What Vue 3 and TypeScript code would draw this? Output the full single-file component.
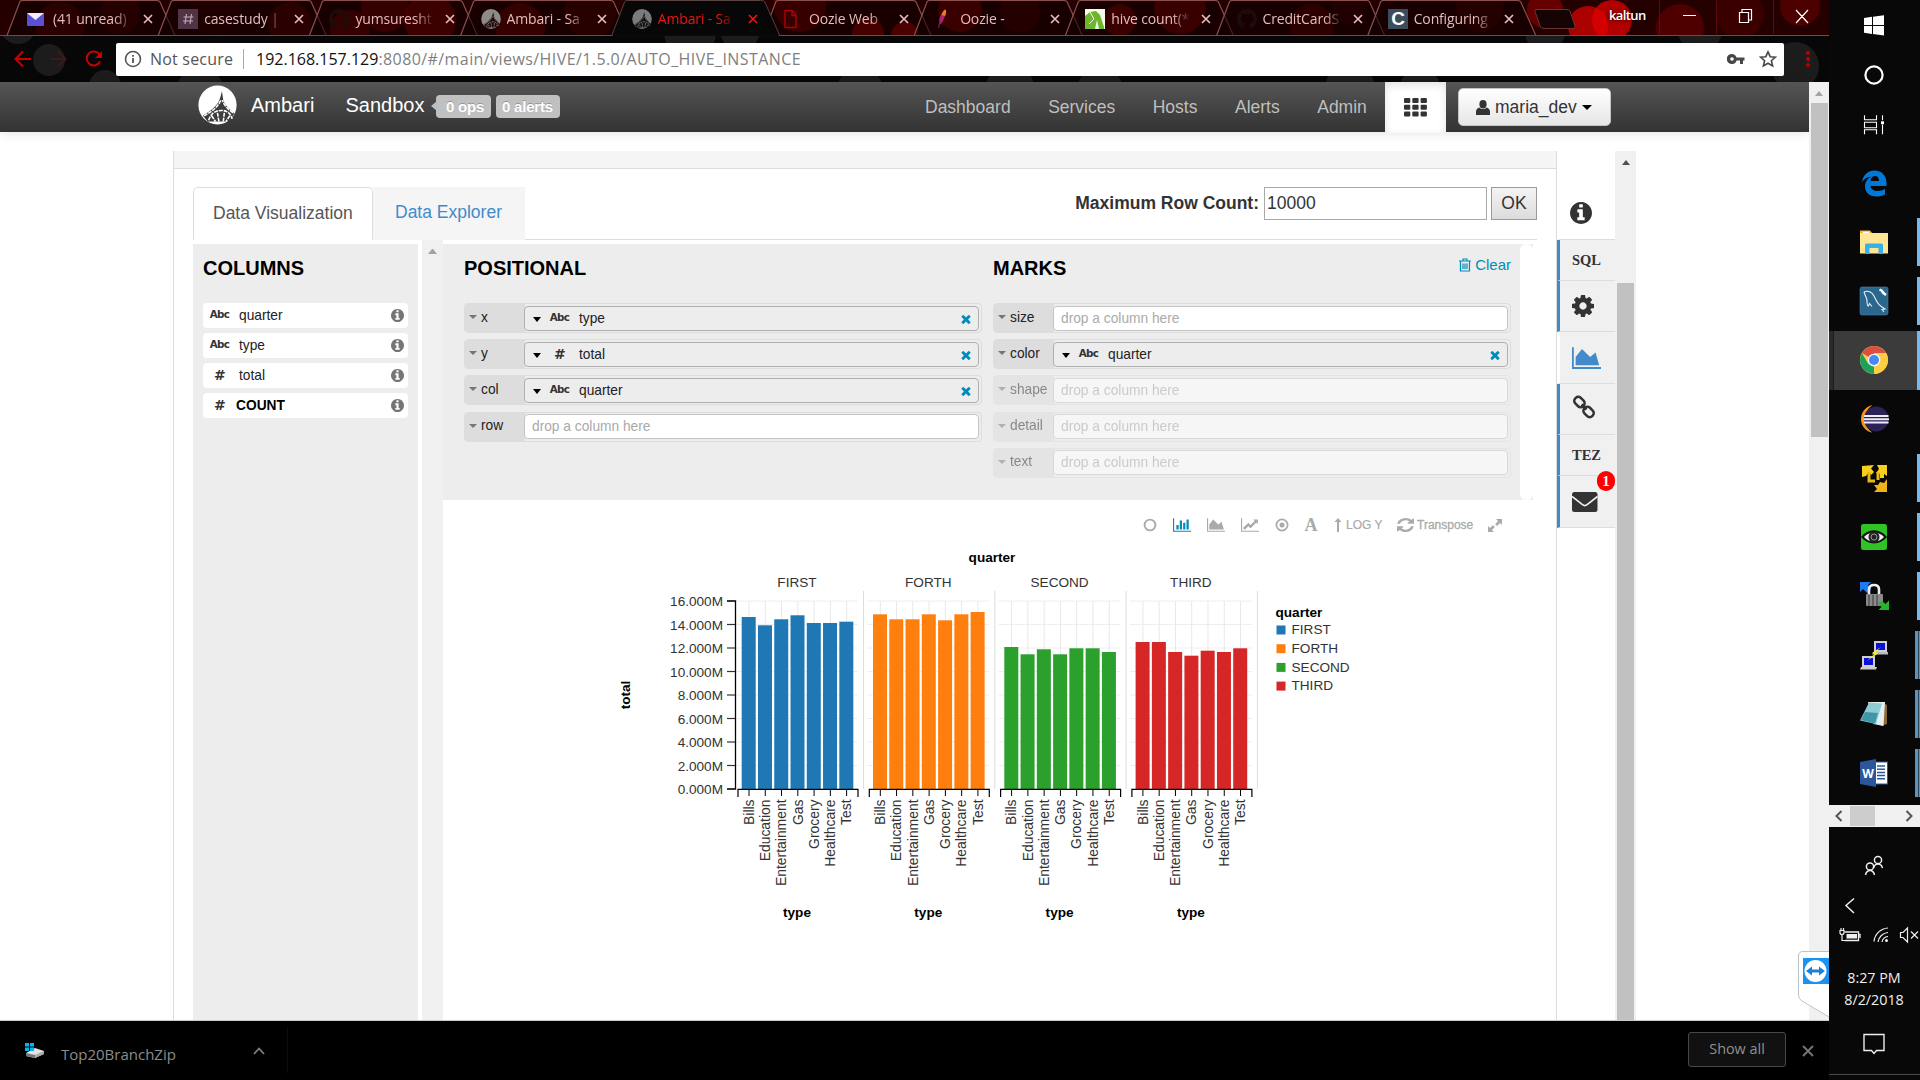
<script setup lang="ts">
interface BrowserTab { title: string; icon: string; active?: boolean }
interface Shelf { label: string; kind?: string; value?: string; disabled?: boolean }
interface TaskItem { icon: string; top: number; mark?: 'one' | 'many'; active?: boolean }
interface Facet { name: string; color: string; tops: number[] }

const FA = {
  info: 'M1152 1376v-160q0-14-9-23t-23-9h-96v-512q0-14-9-23t-23-9h-320q-14 0-23 9t-9 23v160q0 14 9 23t23 9h96v320h-96q-14 0-23 9t-9 23v160q0 14 9 23t23 9h448q14 0 23-9t9-23zm-128-896v-160q0-14-9-23t-23-9h-192q-14 0-23 9t-9 23v160q0 14 9 23t23 9h192q14 0 23-9t9-23zm640 416q0 209-103 385.5t-279.5 279.5-385.5 103-385.5-103-279.5-279.5-103-385.5 103-385.5 279.5-279.5 385.5-103 385.5 103 279.5 279.5 103 385.5z',
  area: 'M2048 1536v128h-2048v-1536h128v1408h1920zm-384-1024l256 896h-1664v-576l448-576 576 576z',
  bar: 'M640 896v512h-256v-512h256zm384-512v1024h-256v-1024h256zm1024 1152v128h-2048v-1536h128v1408h1920zm-640-896v768h-256v-768h256zm384-384v1152h-256v-1152h256z',
  line: 'M2048 1536v128h-2048v-1536h128v1408h1920zm-128-1248v435q0 21-19.5 29.5t-35.5-7.5l-121-121-633 633q-10 10-23 10t-23-10l-233-233-416 416-192-192 585-585q10-10 23-10t23 10l233 233 464-464-121-121q-16-16-7.5-35.5t29.5-19.5h435q14 0 23 9t9 23z',
  gear: 'M1152 896q0-106-75-181t-181-75-181 75-75 181 75 181 181 75 181-75 75-181zm512-109v222q0 12-8 23t-20 13l-185 28q-19 54-39 91 35 50 107 138 10 12 10 25t-9 23q-27 37-99 108t-94 71q-12 0-26-9l-138-108q-44 23-91 38-16 136-29 186-7 28-36 28h-222q-14 0-24.5-8.5t-11.5-21.5l-28-184q-49-16-90-37l-141 107q-10 9-25 9-14 0-25-11-126-114-165-168-7-10-7-23 0-12 8-23 15-21 51-66.5t54-70.5q-27-50-41-99l-183-27q-13-2-21-12.5t-8-23.5v-222q0-12 8-23t19-13l186-28q14-46 39-92-40-57-107-138-10-12-10-24 0-10 9-23 26-36 98.5-107.5t94.5-71.5q13 0 26 10l138 107q44-23 91-38 16-136 29-186 7-28 36-28h222q14 0 24.5 8.5t11.5 21.5l28 184q49 16 90 37l142-107q9-9 24-9 13 0 25 10 129 119 165 170 7 8 7 22 0 12-8 23-15 21-51 66.5t-54 70.5q26 50 41 98l183 28q13 2 21 12.5t8 23.5z',
  times: 'M1490 1322q0 40-28 68l-136 136q-28 28-68 28t-68-28l-294-294-294 294q-28 28-68 28t-68-28l-136-136q-28-28-28-68t28-68l294-294-294-294q-28-28-28-68t28-68l136-136q28-28 68-28t68 28l294 294 294-294q28-28 68-28t68 28l136 136q28 28 28 68t-28 68l-294 294 294 294q28 28 28 68z',
  refresh: 'M1639 1056q0 5-1 7-64 268-268 434.5t-478 166.5q-146 0-282.5-55t-243.5-157l-129 129q-19 19-45 19t-45-19-19-45v-448q0-26 19-45t45-19h448q26 0 45 19t19 45-19 45l-137 137q71 66 161 102t187 36q134 0 250-65t186-179q11-17 53-117 8-23 30-23h192q13 0 22.5 9.5t9.5 22.5zm25-800v448q0 26-19 45t-45 19h-448q-26 0-45-19t-19-45 19-45l138-138q-148-137-349-137-134 0-250 65t-186 179q-11 17-53 117-8 23-30 23h-199q-13 0-22.5-9.5t-9.5-22.5v-7q65-268 270-434.5t480-166.5q146 0 284 55.5t245 156.5l130-129q19-19 45-19t45 19 19 45z',
}

const github = '<path transform="scale(1.25)" fill="#1d0c0c" d="M8 0C3.58 0 0 3.58 0 8c0 3.54 2.29 6.53 5.47 7.59.4.07.55-.17.55-.38 0-.19-.01-.82-.01-1.49-2.01.37-2.53-.49-2.69-.94-.09-.23-.48-.94-.82-1.13-.28-.15-.68-.52-.01-.53.63-.01 1.08.58 1.23.82.72 1.21 1.87.87 2.33.66.07-.52.28-.87.51-1.07-1.78-.2-3.64-.89-3.64-3.95 0-.87.31-1.59.82-2.15-.08-.2-.36-1.02.08-2.12 0 0 .67-.21 2.2.82.64-.18 1.32-.27 2-.27s1.36.09 2 .27c1.53-1.04 2.2-.82 2.2-.82.44 1.1.16 1.92.08 2.12.51.56.82 1.27.82 2.15 0 3.07-1.87 3.75-3.65 3.95.29.25.54.73.54 1.48 0 1.07-.01 1.93-.01 2.2 0 .21.15.46.55.38A8.01 8.01 0 0 0 16 8c0-4.42-3.58-8-8-8z"/>'
const ambari = (disc: string, ink: string) =>
  `<ellipse cx="10" cy="10" rx="9.8" ry="10" fill="${disc}"/><path fill="${ink}" d="M12.3 3l.5 3.600c.1 1.800 1.600 4.400 5.800 7.600L16.500 18.500H5L2.400 15.400c4.500-2.200 8-5.600 8.900-8.800z"/><path d="M5.500 17.800c1-3.500 3.500-5 6.500-5s4.800 1.500 5.500 4.300M7 15.500l2 3M10 14l.8 5M13.500 14l-.6 5M16.300 15.500l-2 3M3 15.600c5-2.600 7.600-5.200 8.800-8.400M18 14c-3-2-5-4.500-5.500-6.500" stroke="${disc}" stroke-width=".8" fill="none" stroke-dasharray="2 .5"/>`

const tabIcons: Record<string, string> = {
  mail: '<rect y="4" width="17" height="13" rx="1" fill="#5a4fd6"/><path d="M0 4h17l-8.500 7z" fill="#f2ecff"/>',
  hash: '<rect y="0" width="20" height="20" fill="#4e3444"/><path d="M8.500 5l-1.500 10M13.500 5l-1.500 10M5.500 8h10M5 12h10" stroke="#c9a8b8" stroke-width="1.100"/>',
  github,
  ambari: ambari('#8d8a88', '#1d0605'),
  ambariActive: ambari('#7b7b7b', '#111'),
  doc: '<path d="M2 1.500h7l4 4.500v12.500H2zM9 1.500v5h4" fill="none" stroke="#b00000" stroke-width="1.400"/>',
  feather: '<path d="M11 .5c2 1 1 5-1 9-1 2.500-2 5-4.500 6.500C4 12 6.500 4 11 .5z" fill="#b3206d"/><path d="M11 .5c2 1 1 4 0 6.500L7.500 6C8.500 3.500 9.500 1.500 11 .5z" fill="#ee7a22"/><path d="M6 12l-1.500 7" stroke="#62215c" stroke-width="1.200"/>',
  elephant: '<rect width="20" height="20" fill="#f4fbe9"/><path d="M0 20V7L5 3l6-1 4 4 4 12v2h-5l-2-9-2 9z" fill="#6cb52d"/><path d="M5 3l4 7-5 5" stroke="#f4fbe9" fill="none"/>',
  c: '<rect width="20" height="20" fill="#3b4c5b"/><text x="10" y="16.200" text-anchor="middle" font-family="Liberation Sans, sans-serif" font-weight="700" font-size="19" fill="#fff">C</text>',
}
const browserTabs: BrowserTab[] = [
  { title: '(41 unread)', icon: 'mail' }, { title: 'casestudy |', icon: 'hash' },
  { title: 'yumsuresht', icon: 'github' }, { title: 'Ambari - Sa', icon: 'ambari' },
  { title: 'Ambari - Sa', icon: 'ambariActive', active: true }, { title: 'Oozie Web', icon: 'doc' },
  { title: 'Oozie -', icon: 'feather' }, { title: 'hive count(*', icon: 'elephant' },
  { title: 'CreditCardS', icon: 'github' }, { title: 'Configuring', icon: 'c' },
]
const tabPath = (i: number) => {
  const x = 24 + 151.2 * i
  return `M${x - 17} 35.500L${x - 4} 1.500Q${x - 3.500} .5 ${x - 1} .5H${x + 132}Q${x + 135} .5 ${x + 136} 2L${x + 151} 35.500`
}
const bokeh: [number, number, number, string][] = [
  [60, 26, 24, '#5a0000'], [120, 14, 20, '#4a0000'], [215, 8, 26, '#3a0000'], [290, 24, 22, '#5c0000'], [350, 30, 20, '#7a0000'],
  [385, 8, 24, '#7d0000'], [430, 20, 26, '#960000'], [520, 28, 25, '#7d0000'], [590, 12, 26, '#500000'], [800, 6, 26, '#800000'],
  [868, 34, 16, '#b00000'], [905, 36, 14, '#c80000'], [960, 10, 22, '#8a0000'], [1020, 12, 20, '#480000'], [1120, 20, 16, '#8c0000'],
  [1180, 8, 26, '#8a0000'], [1312, 26, 22, '#640000'], [1350, 6, 18, '#3c0000'], [1480, 8, 24, '#480000'], [1545, 10, 18, '#7c0000'],
  [1588, 26, 20, '#d80000'], [1612, 20, 20, '#e00000'], [1680, 28, 24, '#5c0000'], [1740, 14, 24, '#420000'], [1800, 6, 20, '#5a0000'],
]
const greyBokeh: [number, number, number][] = [[18, -10, 18], [49, 24, 16], [105, 50, 16], [200, 56, 24], [690, -4, 26], [740, -6, 20], [860, 52, 22], [1010, 52, 24], [1100, 52, 22], [1350, 50, 24], [1420, 52, 20], [1545, -4, 20], [1700, -6, 22], [1795, 30, 24]]

const navLinks = ['Dashboard', 'Services', 'Hosts', 'Alerts', 'Admin']
const columns = [
  { kind: 'Abc', name: 'quarter' }, { kind: 'Abc', name: 'type' },
  { kind: '#', name: 'total' }, { kind: '#', name: 'COUNT', bold: true },
]
const encodings: { title: string; shelves: Shelf[] }[] = [
  { title: 'POSITIONAL', shelves: [
    { label: 'x', kind: 'Abc', value: 'type' }, { label: 'y', kind: '#', value: 'total' },
    { label: 'col', kind: 'Abc', value: 'quarter' }, { label: 'row' }] },
  { title: 'MARKS', shelves: [
    { label: 'size' }, { label: 'color', kind: 'Abc', value: 'quarter' },
    { label: 'shape', disabled: true }, { label: 'detail', disabled: true }, { label: 'text', disabled: true }] },
]

const facets: Facet[] = [
  { name: 'FIRST', color: '#1f77b4', tops: [617, 625.3, 619.3, 615.3, 623, 623, 621.7] },
  { name: 'FORTH', color: '#ff7f0e', tops: [614.3, 619.3, 619.3, 614.3, 620.3, 614.3, 612] },
  { name: 'SECOND', color: '#2ca02c', tops: [647, 654.3, 649.3, 654.3, 648.3, 648.3, 652] },
  { name: 'THIRD', color: '#d62728', tops: [642, 642, 652, 655.7, 650.7, 652, 648.3] },
]
const categories = ['Bills', 'Education', 'Entertainment', 'Gas', 'Grocery', 'Healthcare', 'Test']
const yTicks = Array.from({ length: 9 }, (_, i) => ({ label: `${i * 2}.000M`, y: 789 - i * 23.5 }))

const taskIcons: Record<string, string> = {
  windows: '<path fill="#fff" d="M4 7l8-1.200V14H4zM13 5.700L24 4.200V14H13zM4 15h8v8l-8-1.200zM13 15h11v9.600l-11-1.500z"/>',
  cortana: '<circle cx="14" cy="14" r="8.600" fill="none" stroke="#fff" stroke-width="2.200"/>',
  view: '<path transform="translate(0 -2.200)" fill="none" stroke="#fff" stroke-width="1.100" d="M4.500 4.500v4.500h12V4.500M4.500 23.500V19h12v4.500M4.500 11.500h12V17h-12zM22.500 4.500v5M22.500 14v9.500"/><rect x="21" y="8.300" width="3" height="3" fill="#fff"/>',
  edge: '<path fill="#0078d7" d="M2 13C3 6 8 1.500 14.500 1.500 22 1.500 26.500 7 26.500 14v3H10.500c.3 3.500 3.500 5 7 5 3 0 5.500-.8 7.500-2v5.500c-2.500 1.500-5.500 2-8.500 2-7 0-11.500-4-11.500-10 0-4.500 2.500-8 6.500-10C7 8 4 10 2 13zM10.500 12h8.500c0-3-1.500-5-4-5s-4.200 2-4.500 5z"/>',
  folder: '<path fill="#f5b82e" d="M0 2.500h10l2.500 3H0z"/><path fill="#ffe694" d="M0 5h28v20.500H0z"/><rect x="3" y="3.700" width="6" height="1.500" fill="#fff"/><path fill="#38b0e8" d="M5 26V17q0-1.500 1.500-1.500h15Q23 15.500 23 17v9h-4.500v-6h-9v6z"/>',
  mysql: '<rect x="0" y="0" width="28" height="28" rx="2" fill="#2b668c" stroke="#4985a8" stroke-width=".6"/><path d="M4 5c4-2 8 0 10 4 3 6 4 9 8 11l3 2-3 .5 2 2.500M4 5c1 4 3 5 3 9 0 3 0 5 1.500 5l1-2.500 2.500 3" fill="none" stroke="#e8f2f8" stroke-width="1.100"/><path d="M19.500 2.500l2 1 3 3.500M22 5l4 3" stroke="#fff" stroke-width="2.400" fill="none"/>',
  chrome: '<circle cx="14" cy="14" r="14" fill="#ffcd42"/><path fill="#d94f43" d="M14 14L1.900 7A14 14 0 0 1 26.100 7H14z"/><path fill="#1da05c" d="M1.900 7L8 17.500 14 21l0 7A14 14 0 0 1 1.900 7z"/><path fill="#ffcd42" d="M26.100 7A14 14 0 0 1 14 28l6-11-2-10z"/><circle cx="14" cy="14" r="6.300" fill="#f1f5fa"/><circle cx="14" cy="14" r="5" fill="#4688f4"/>',
  eclipse: '<path d="M12.500 .3A13.900 13.900 0 0 0 12.500 27.700 16 16 0 0 1 12.500 .3z" fill="#f7941e"/><circle cx="16.300" cy="14" r="12.400" fill="#2c2255"/><path d="M4 11h24.500M3.600 14.200h25.400M4 17.400h24.500" stroke="#efecf7" stroke-width="2"/>',
  vmware: '<path fill="#f7cf1d" d="M2 2l12-1-3 3.500 3 3.500-3 3-2-3-3 4-4 1zM17 1h10v11l-3-2v4h-4v-4l-4-1 3-4z"/><path fill="#efb31b" d="M27 15v13H14l3-3-3-4 4 0 2-3 4 1z"/><path d="M9 8v9h6M18 8v8" stroke="#e8b914" stroke-width="3" fill="none"/>',
  eye: '<rect x="1" y="1" width="26" height="26" rx="2.500" fill="#2fc424"/><path d="M1 14C8 5 20 5 27 14 20 22.500 8 22.500 1 14z" fill="#111"/><path d="M4 14c5-6 15-6 20 0-5 6-15 6-20 0z" fill="#eee"/><circle cx="14" cy="14" r="5.500" fill="#222"/><circle cx="14" cy="14" r="3" fill="none" stroke="#999"/>',
  lock: '<path fill="#1f7af0" d="M0 0h11L8 3l3 4-4 4-4-4-3 3z"/><path d="M9 13V7.500q0-4.500 5-4.500t5 4.500V13" fill="none" stroke="#eee" stroke-width="2.600"/><rect x="6" y="12" width="17" height="12" rx="1" fill="#8a8a8a"/><path d="M9 13v11M13 13v11M17 13v11" stroke="#555" stroke-width="1.500"/><path fill="#25b52d" d="M29 28H18.500l3-3-3.500-3.500 3.500-3 4 3.500 3.500-3.500z"/>',
  putty: '<rect x="14" y="0" width="13" height="11" fill="#d0d0d0"/><rect x="16" y="2" width="9" height="7" fill="#0a12d8"/><path d="M13 11h15v2.500H12z" fill="#bbb"/><rect x="2" y="15" width="13" height="11" fill="#d0d0d0"/><rect x="4" y="17" width="9" height="7" fill="#0a12d8"/><path d="M1 26h16l-1 2.500H0z" fill="#ccc"/><path d="M21 6l-8.500 5.500 2 1.500L7 20l11-7.500-2.500-1.500z" fill="#ffee1b"/>',
  notepad: '<path fill="#8c6a35" d="M22 2l5 3v19l-6 2z"/><path fill="#e6eff0" d="M8 2h17l-1.500 24-10-2z"/><path fill="#8fcbd4" d="M9 2.500l13 1-6 20.500L0 20.500z"/><path fill="#3e98a8" d="M5 12l13 1-3 10.500L1 20z"/>',
  word: '<rect x="14" y="3" width="13.500" height="22" fill="#fff" stroke="#2b579a"/><path d="M17 7h8M17 10.200h8M17 13.400h8M17 16.600h8M17 19.800h8" stroke="#2b579a" stroke-width="1.500"/><path fill="#2b579a" d="M0 3l16-3v28L0 25z"/><text x="8" y="18.500" text-anchor="middle" font-family="Open Sans, sans-serif" font-weight="700" font-size="12" fill="#fff">W</text>',
}
const taskItems: TaskItem[] = [
  { icon: 'windows', top: 25 }, { icon: 'cortana', top: 75 }, { icon: 'view', top: 124.5 }, { icon: 'edge', top: 183 },
  { icon: 'folder', top: 242, mark: 'one' }, { icon: 'mysql', top: 301, mark: 'one' }, { icon: 'chrome', top: 360, mark: 'one', active: true },
  { icon: 'eclipse', top: 419 }, { icon: 'vmware', top: 478, mark: 'one' }, { icon: 'eye', top: 537, mark: 'one' },
  { icon: 'lock', top: 596, mark: 'one' }, { icon: 'putty', top: 655, mark: 'many' }, { icon: 'notepad', top: 714, mark: 'many' }, { icon: 'word', top: 773, mark: 'many' },
]
const slotHeight = (i: number) => {
  const edge = (k: number) => k < 0 ? 0 : k >= taskItems.length - 1 ? 802 : (taskItems[k].top + taskItems[k + 1].top) / 2
  return edge(i) - edge(i - 1)
}
</script>

<template>
  <div class="desktop">
    <div class="browser">
      <header class="tabstrip">
        <svg class="backdrop" width="1829" height="36">
          <rect width="1829" height="36" fill="#240000" />
          <circle v-for="(b, i) in bokeh" :key="i" :cx="b[0]" :cy="b[1]" :r="b[2]" :fill="b[3]" opacity=".75" />
          <template v-for="(t, i) in browserTabs" :key="i">
            <path v-if="!t.active" :d="tabPath(i)" fill="rgba(18,0,0,.58)" stroke="#8a5050" stroke-width="1.200" />
          </template>
          <path d="M0 35.500H1829" stroke="#8a4040" />
          <path :d="tabPath(4)" fill="#070707" stroke="#5a4040" />
          <path d="M613 35.500H778" stroke="#0a0a0a" stroke-width="2" />
          <path d="M1536 9.500H1567Q1569 9.500 1570 11L1575 26Q1576 28.500 1573 28.500H1544Q1541 28.500 1540 26L1535 11.500Q1534 9.500 1536 9.500Z" fill="#160404" stroke="#6b3535" />
          <path d="M1659.500 0V34M1716.500 0V34M1773.500 0V34" stroke="#5c0a0a" />
        </svg>
        <div v-for="(t, i) in browserTabs" :key="i" class="btab" :class="{ on: t.active }">
          <svg class="fav" width="20" height="20" v-html="tabIcons[t.icon]" />
          <span class="btitle">{{ t.title }}</span>
          <svg class="bclose" width="10" height="10" viewBox="0 0 10 10"><path d="M1 1l8 8M9 1L1 9" stroke="currentColor" stroke-width="1.700" /></svg>
        </div>
        <span class="profile">kaltun</span>
        <svg class="winbtns" width="158" height="34" fill="none" stroke="#fff" stroke-width="1.200">
          <path d="M12 15.500h13M68.500 12.500h9v10h-9zM71 12v-2.500h9.500V20H78M125 10l12 13M137 10l-12 13" />
        </svg>
      </header>

      <div class="toolbar">
        <svg class="backdrop" width="1829" height="46">
          <rect width="1829" height="46" fill="#070707" />
          <circle v-for="(b, i) in greyBokeh" :key="i" :cx="b[0]" :cy="b[1]" :r="b[2]" fill="#242424" opacity=".75" />
        </svg>
        <svg class="navicons" width="116" height="46" fill="none" stroke="#c80000" stroke-width="2">
          <path d="M31 23H16M23 15.500L15.500 23l7.500 7.500" />
          <path d="M50 23h15M58 15.500l7.500 7.500-7.500 7.500" stroke="#3d1a1a" />
          <path d="M99.500 18.500A7 7 0 1 0 100 25.500" /><path d="M102 15v7h-7z" fill="#c80000" stroke="none" />
        </svg>
        <div class="omnibox">
          <svg width="18" height="18" viewBox="0 0 18 18"><circle cx="9" cy="9" r="7.500" fill="none" stroke="#555" stroke-width="1.600" /><path d="M8.100 8h1.800v5H8.100zM8.100 5h1.800v1.800H8.100z" fill="#555" /></svg>
          <span class="secure">Not secure</span>
          <span class="rule" />
          <span class="url"><b>192.168.157.129</b>:8080/#/main/views/HIVE/1.5.0/AUTO_HIVE_INSTANCE</span>
          <svg class="key" width="18" height="12" viewBox="0 0 18 12"><path fill="#484848" fill-rule="evenodd" d="M5 1a5 5 0 1 0 4.600 6.500H13V11h3V7.500h1.500v-3h-8A5 5 0 0 0 5 1zM5 4.200a1.800 1.800 0 1 1 0 3.600 1.800 1.800 0 0 1 0-3.600z" /></svg>
          <svg class="star" width="18" height="18" viewBox="0 0 18 18"><path fill="none" stroke="#484848" stroke-width="1.600" d="M9 1.800l2.200 4.900 5.200.5-4 3.500 1.200 5.200L9 13.200l-4.600 2.700 1.200-5.200-4-3.500 5.200-.5z" /></svg>
        </div>
        <svg class="menu" width="10" height="20" fill="#c00000"><circle cx="5" cy="4" r="2" /><circle cx="5" cy="10" r="2" /><circle cx="5" cy="16" r="2" /></svg>
      </div>

      <div class="page">
        <div class="viewport">
          <nav class="ambari">
            <svg class="logo" width="39" height="40" viewBox="0 0 20 20" v-html="ambari('#fff', '#3d3d3d')" />
            <span class="brand">Ambari</span>
            <span class="cluster">Sandbox</span>
            <span class="pill ops">0 ops</span>
            <span class="pill">0 alerts</span>
            <div class="links"><span v-for="l in navLinks" :key="l">{{ l }}</span></div>
            <div class="views">
              <svg width="23" height="19" fill="#333"><template v-for="r in 3" :key="r"><rect v-for="c in 3" :key="c" :x="(c - 1) * 8.300" :y="(r - 1) * 6.800" width="6.300" height="5" rx="1" /></template></svg>
            </div>
            <div class="user">
              <svg width="14" height="15" viewBox="0 0 14 15" fill="#333"><ellipse cx="7" cy="4.200" rx="3.600" ry="4.200" /><path d="M0 15v-3.500C0 9 2 8 3.500 7.500 5 9.500 9 9.500 10.500 7.500 12 8 14 9 14 11.500V15z" /></svg>
              <span>maria_dev</span><i class="caret" />
            </div>
          </nav>

          <div class="frame">
            <main>
              <div class="strip" />
              <div class="inner">
                <div class="tabs">
                  <div class="tab on">Data Visualization</div>
                  <div class="tab">Data Explorer</div>
                  <div class="rowcount">
                    <b>Maximum Row Count:</b>
                    <span class="input">10000</span>
                    <span class="ok">OK</span>
                  </div>
                </div>
                <div class="work">
                  <section class="columns">
                    <h2>COLUMNS</h2>
                    <div v-for="c in columns" :key="c.name" class="field">
                      <span class="kind" :class="{ num: c.kind === '#' }">{{ c.kind }}</span>
                      <span class="fname" :class="{ bold: c.bold }">{{ c.name }}</span>
                      <svg width="13" height="13" viewBox="128 128 1536 1536"><path :d="FA.info" fill="#757575" /></svg>
                    </div>
                  </section>
                  <div class="colscroll"><i /></div>
                  <div class="right">
                    <section class="encode">
                      <div class="encbody">
                        <div v-for="g in encodings" :key="g.title" class="group">
                          <div class="ghead">
                            <h2>{{ g.title }}</h2>
                            <span v-if="g.title === 'MARKS'" class="clear">
                              <svg width="12" height="14" viewBox="0 0 12 14" fill="none" stroke="#008cba" stroke-width="1.200"><path d="M0 3h12M4 3V1h4v2M1.500 3v10h9V3M4 5.500v5.500M6 5.500v5.500M8 5.500v5.500" /></svg>Clear
                            </span>
                          </div>
                          <div v-for="s in g.shelves" :key="s.label" class="shelf" :class="{ off: s.disabled }">
                            <span class="slabel"><i />{{ s.label }}</span>
                            <div class="drop" :class="{ full: s.value }">
                              <template v-if="s.value">
                                <i class="caret" />
                                <span class="kind" :class="{ num: s.kind === '#' }">{{ s.kind }}</span>
                                <span class="val">{{ s.value }}</span>
                                <svg width="10" height="10" viewBox="302 238 1188 1316"><path :d="FA.times" fill="#008cba" /></svg>
                              </template>
                              <template v-else>drop a column here</template>
                            </div>
                          </div>
                        </div>
                      </div>
                      <div class="encscroll"><i /></div>
                    </section>
                    <div class="marktools">
                      <svg class="t1" width="14" height="14"><circle cx="7" cy="7" r="5.400" fill="none" stroke="#aaa" stroke-width="1.900" /></svg>
                      <svg class="t2" width="18" height="14" viewBox="0 128 2048 1536"><path :d="FA.bar" fill="#008cba" /></svg>
                      <svg class="t3" width="18" height="14" viewBox="0 128 2048 1536"><path :d="FA.area" fill="#aaa" /></svg>
                      <svg class="t4" width="18" height="14" viewBox="0 128 2048 1536"><path :d="FA.line" fill="#aaa" /></svg>
                      <svg class="t5" width="14" height="14"><circle cx="7" cy="7" r="5.600" fill="none" stroke="#aaa" stroke-width="1.700" /><circle cx="7" cy="7" r="2.500" fill="#aaa" /></svg>
                      <span class="letter">A</span>
                      <svg class="t7" width="8" height="14" fill="#aaa"><path d="M4 0l3.500 4H5v10H3V4H.5z" /></svg>
                      <span class="logy">LOG Y</span>
                      <svg class="t8" width="17" height="14" viewBox="128 128 1536 1536" preserveAspectRatio="none"><path :d="FA.refresh" fill="#aaa" /></svg>
                      <span class="trans">Transpose</span>
                      <svg class="t9" width="14" height="13" fill="#aaa"><path d="M8 0h6v6l-2-2-3 3-1.800-1.800L10 2zM6 13H0V7l2 2 3-2.800L6.800 8 4 11z" /></svg>
                    </div>
                    <svg class="chart" width="780" height="400" viewBox="610 544 780 400">
                      <text x="992" y="561.500" class="ct">quarter</text>
                      <text transform="translate(630 695) rotate(-90)" class="ct">total</text>
                      <g v-for="(f, i) in facets" :key="f.name" :transform="`translate(${i * 131.3} 0)`">
                        <path v-for="t in yTicks" :key="t.y" :d="`M736 ${t.y}H858`" stroke="#eee" />
                        <path v-for="(c, k) in categories" :key="c" :d="`M${749 + k * 16.270} 601V789`" stroke="#e8e8e8" />
                        <path d="M863.500 591V789" stroke="#ddd" />
                        <text x="797" y="587" class="mid">{{ f.name }}</text>
                        <rect v-for="(y, k) in f.tops" :key="k" :x="741.700 + k * 16.270" :y="y" width="14" :height="789 - y" :fill="f.color" />
                        <path d="M738 797V789.300H858V797" fill="none" stroke="#000" stroke-width="1.200" />
                        <g v-for="(c, k) in categories" :key="c" :transform="`translate(${749 + k * 16.270} 0)`">
                          <path d="M0 789V796" stroke="#000" />
                          <text transform="translate(4.700 799.500) rotate(-90)" class="end cat">{{ c }}</text>
                        </g>
                        <text x="797" y="916.500" class="ct">type</text>
                      </g>
                      <path d="M727 601H735.500V789H727" fill="none" stroke="#000" stroke-width="1.300" />
                      <g v-for="t in yTicks" :key="t.y">
                        <path :d="`M727 ${t.y}H735`" stroke="#333" stroke-width="1.200" />
                        <text x="723" :y="t.y + 5" class="end">{{ t.label }}</text>
                      </g>
                      <text x="1275.500" y="616.500" class="lt">quarter</text>
                      <g v-for="(f, i) in facets" :key="f.name" :transform="`translate(0 ${i * 18.700})`">
                        <rect x="1276.500" y="625.500" width="9" height="9" :fill="f.color" />
                        <text x="1291.500" y="634.200">{{ f.name }}</text>
                      </g>
                    </svg>
                  </div>
                </div>
              </div>
            </main>
            <aside>
              <div class="side plain"><svg width="22" height="22" viewBox="128 128 1536 1536"><path :d="FA.info" fill="#333" /></svg></div>
              <div class="side short">SQL</div>
              <div class="side"><svg width="22" height="22" viewBox="128 128 1536 1536"><path :d="FA.gear" fill="#333" /></svg></div>
              <div class="side on"><svg width="29" height="22" viewBox="0 128 2048 1536"><path :d="FA.area" fill="#428bca" /></svg></div>
              <div class="side link"><svg width="24" height="24" viewBox="0 0 24 24" fill="none" stroke="#333" stroke-width="2.500"><rect x="2" y="3.200" width="11" height="7.800" rx="3.500" transform="rotate(45 7.500 7)" /><rect x="11" y="13" width="11" height="7.800" rx="3.500" transform="rotate(45 16.500 17)" /><path d="M9.500 9.500l5 5" /></svg></div>
              <div class="side short">TEZ</div>
              <div class="side mail">
                <svg width="26" height="20" viewBox="0 0 26 20"><rect width="25.500" height="20" rx="2.500" fill="#333" /><path d="M0 4.500l10.500 8.200q2.300 1.800 4.600 0L25.500 4.500" fill="none" stroke="#f0f0f0" stroke-width="1.600" /></svg>
                <span class="badge">1</span>
              </div>
            </aside>
            <div class="vscroll"><i class="arrow" /><i class="thumb" /></div>
          </div>
        </div>
        <div class="pagescroll"><i class="arrow" /><i class="thumb" />
          <svg class="viewer" width="31" height="68"><path d="M31 .5H5Q.5 .5 .5 5V44Q.5 48 4 50L31 66" fill="#fff" stroke="#b9c4cc" /><rect x="5" y="7" width="26" height="26" fill="#1a93f0" /><circle cx="17.500" cy="20" r="11" fill="#fff" /><path d="M8 20l6-4.500v3h7v-3l6 4.500-6 4.500v-3h-7v3z" fill="#1a80dc" /></svg>
        </div>
      </div>

      <footer class="downloads">
        <svg width="20" height="17" viewBox="0 0 20 17"><path d="M1 11l9-5 9 3v3l-9 4-9-2z" fill="#e2e2e2" /><path d="M1 11l9 2v3l-9-2z" fill="#777" /><path d="M10 13l9-4v3l-9 4z" fill="#aaa" /><path d="M0 1h4v3.500H0zM5 1h4v3.500H5zM0 5.500h4V9H0zM5 5.500h4V9H5z" fill="#00b7f0" /></svg>
        <span class="dname">Top20BranchZip</span>
        <svg class="up" width="12" height="8" fill="none" stroke="#808080" stroke-width="1.800"><path d="M1 7l5-5.500L11 7" /></svg>
        <span class="dsep" />
        <span class="showall">Show all</span>
        <svg class="dx" width="12" height="12" fill="none" stroke="#777" stroke-width="1.900"><path d="M1 1l10 10M11 1L1 11" /></svg>
      </footer>
    </div>

    <div class="taskbar">
      <div v-for="(t, i) in taskItems" :key="t.icon" class="slot" :class="{ active: t.active }" :style="{ height: slotHeight(i) + 'px' }">
        <svg width="28" height="28" overflow="visible" v-html="taskIcons[t.icon]" />
        <i v-if="t.mark" :class="t.mark" />
      </div>
      <div class="hscroll">
        <svg width="91" height="22" fill="none" stroke="#555" stroke-width="2"><rect x="21" y="1" width="25" height="20" fill="#cdcdcd" stroke="none" /><path d="M12.500 6l-5 5 5 5M77.500 6l5 5-5 5" /></svg>
      </div>
      <svg class="tray" width="91" height="130" fill="none" stroke="#eee" stroke-width="1.500">
        <circle cx="49" cy="33" r="3.600" /><path d="M44.500 41q1-4 4.500-4t4.500 4" /><circle cx="41" cy="39.500" r="3.600" /><path d="M36.500 48q1-4.500 4.500-4.500t4.500 4.500" />
        <path d="M25 71.500l-8 7 8 7.500" />
        <path d="M15.500 105h14v8.500H16M29.500 107.500h1.500v3.500" stroke-width="1.300" /><path d="M17.500 107h10.500v4.500H17.500z" fill="#eee" stroke="none" /><path d="M11 103.500v2q0 2 2 2t2-2v-2zM12 101v2.500M14.500 101v2.500M13 107.500v6h3" stroke-width="1.200" />
        <path d="M45 114.500a15 15 0 0 1 14-13.500M49 115a11 11 0 0 1 10-9.500M53 115a7 7 0 0 1 6-5.500" stroke-width="1.200" /><circle cx="57.500" cy="113.500" r="1.500" fill="#eee" stroke="none" />
        <path d="M71.500 105.500h2.500l4.500-4.500v14l-4.500-4.500h-2.500zM82 104.500l7 7M89 104.500l-7 7" stroke-width="1.200" />
      </svg>
      <div class="clock">8:27 PM<br>8/2/2018</div>
      <svg class="note" width="22" height="24" fill="none" stroke="#eee" stroke-width="1.400"><path d="M1 1.500h20v16h-7.500L11 20.500 8.500 17.500H1z" /></svg>
      <div class="edge" />
    </div>
  </div>
</template>

<style>
body { margin: 0; overflow: hidden; background: #080808; }
</style>
<style scoped>
* { box-sizing: border-box; }
.desktop { display: flex; width: 1920px; height: 1080px; overflow: hidden; font-family: "Liberation Sans", Arial, sans-serif; }
.browser { width: 1829px; display: flex; flex-direction: column; }
svg { flex: none; display: block; }
.backdrop { position: absolute; left: 0; top: 0; }

.tabstrip { position: relative; height: 36px; display: flex; padding-left: 27px; font: 14px/36px "Open Sans", sans-serif; color: #e6bcbc; }
.btab { position: relative; flex: none; width: 151.2px; height: 36px; display: flex; align-items: center; padding-top: 2px; }
.fav { margin-right: 6px; }
.btitle { width: 80px; overflow: hidden; white-space: nowrap; letter-spacing: -.15px; mask-image: linear-gradient(90deg, #000 76%, transparent 100%); }
.bclose { margin-left: 10px; }
.btab.on { color: #f01515; }
.profile { position: relative; flex: none; margin: -3px 0 0 70px; font-size: 13px; font-weight: 600; letter-spacing: -.6px; color: #fff; width: 41px; text-shadow: 0 0 4px #000; }
.winbtns { position: relative; margin-left: 21px; }

.toolbar { position: relative; height: 46px; display: flex; align-items: center; }
.navicons { position: relative; }
.omnibox { position: relative; width: 1668px; height: 33px; background: #fff; border-radius: 2px; display: flex; align-items: center; padding: 0 8px; font: 16px/33px "Open Sans", sans-serif; color: #555; }
.secure { margin-left: 8px; width: 82px; white-space: nowrap; letter-spacing: .2px; }
.rule { width: 1px; height: 20px; background: #aaa; margin: 0 12px 0 11px; }
.url { color: #808080; white-space: nowrap; letter-spacing: .42px; }
.url b { font-weight: 400; color: #111; letter-spacing: 0; }
.key { margin-left: auto; }
.star { margin-left: 14px; margin-right: -1px; }
.menu { position: relative; margin-left: 19px; }

.page { height: 938px; display: flex; background: #fff; }
.viewport { width: 1809px; display: flex; flex-direction: column; }
.ambari { height: 50px; flex: none; background: linear-gradient(#555, #333); box-shadow: 0 1px 10px rgba(0, 0, 0, .12); display: flex; align-items: center; padding-left: 198px; position: relative; color: #fff; }
.logo { margin-top: -4px; }
.brand { font-size: 20px; margin-left: 14px; width: 94.5px; margin-top: -4px; }
.cluster { font-size: 20px; width: 90.5px; margin-top: -4px; }
.pill { height: 23px; background: #c0c0c0; border-radius: 4px; font: bold 15px/24px "Liberation Sans", sans-serif; padding: 0 6px; margin-right: 5px; text-shadow: 0 -1px 0 rgba(0, 0, 0, .25); width: 64px; white-space: nowrap; letter-spacing: -.2px; margin-top: -1px; }
.pill.ops { width: 55px; padding-left: 10px; position: relative; }
.pill.ops::before { content: ""; position: absolute; left: -5px; top: 6px; border: 5.5px solid transparent; border-left: 0; border-right: 6px solid #b4bfca; }
.links { margin-left: 360px; display: flex; gap: 37.500px; font-size: 17.5px; color: #bfbfbf; width: 460px; }
.views { width: 61px; height: 51px; background: #fff; box-shadow: inset 0 3px 8px rgba(0, 0, 0, .12); display: flex; align-items: center; justify-content: center; margin-top: 1px; }
.user { margin-left: 12px; margin-top: 0; width: 153px; height: 38px; border-radius: 5px; background: linear-gradient(#fff, #e6e6e6); border: 1px solid #c4c4c4; display: flex; align-items: center; padding-left: 17px; font-size: 17.5px; color: #333; gap: 5px; }
.caret { border: 5px solid transparent; border-top-color: #000; border-bottom: 0; }

.frame { flex: 1; margin: 19px 0 0 173px; display: flex; min-height: 0; }
main { width: 1384px; border-left: 1px solid #ddd; border-right: 1px solid #ddd; }
.strip { height: 18px; background: #f5f5f5; border-bottom: 1px solid #ddd; }
.inner { margin: 18px 19px 0 19px; height: 833px; display: flex; flex-direction: column; }
.tabs { height: 53px; flex: none; display: flex; border-bottom: 1px solid #ddd; font-size: 17.5px; line-height: 51px; }
.tab { height: 53px; width: 152px; padding-left: 22px; background: #f5f5f5; color: #428bca; white-space: nowrap; }
.tab.on { width: 180px; padding-left: 19px; background: #fff; border: 1px solid #ddd; border-bottom-color: #fff; border-radius: 5px 5px 0 0; color: #555; line-height: 50px; }
.rowcount { margin-left: auto; display: flex; line-height: 33px; color: #333; margin-right: 0; height: 33px; }
.rowcount b { margin-right: 5px; white-space: nowrap; }
.input { width: 223px; border: 1.500px solid #a9a9a9; padding-left: 2px; line-height: 31px; margin-right: 4px; }
.ok { width: 46px; border: 1px solid #9a9a9a; background: linear-gradient(#f4f4f4, #dcdcdc); text-align: center; line-height: 31px; }

.work { flex: 1; display: flex; min-height: 0; }
h2 { margin: 0; font-size: 20px; line-height: 24px; color: #000; font-weight: 700; }
.columns { width: 225px; background: #ededed; margin-top: 4px; padding: 12px 10px; }
.columns h2 { margin-bottom: 23px; }
.field { height: 25px; background: #fff; border-radius: 4px; margin-bottom: 5px; display: flex; align-items: center; padding: 0 4px 0 6px; font-size: 13.75px; color: #222; }
.kind { width: 21px; font: bold 10.3px/12px "DejaVu Sans", sans-serif; letter-spacing: -.6px; color: #333; margin-top: -3px; text-align: center; }
.kind.num { font-size: 14px; margin-top: -1px; }
.fname { flex: 1; margin-left: 9px; }
.fname.bold { font-weight: 700; color: #000; margin-left: 6px; }
.colscroll { width: 21px; margin: 0 0 0 4px; background: #f0f0f0; padding: 9px 6px; }
.colscroll i { display: block; border: 4.5px solid transparent; border-top: 0; border-bottom: 5px solid #a3a3a3; }
.right { width: 1094px; }
.encode { display: flex; margin-top: 4px; height: 256px; }
.encbody { width: 1077px; background: #ededed; display: flex; padding-left: 21px; gap: 11px; }
.group { width: 518px; padding-top: 12px; font-size: 13.75px; }
.ghead { display: flex; justify-content: space-between; height: 47px; }
.clear { display: flex; gap: 4px; height: 16px; line-height: 16px; color: #008cba; align-items: center; font-size: 15px; margin-top: 1px; }
.shelf { height: 30px; border: 1px solid #ddd; border-radius: 4px; margin-bottom: 6.200px; display: flex; align-items: center; }
.slabel { width: 60px; height: 28px; background: #ddd; display: flex; align-items: center; gap: 4px; padding: 0 0 2px 4px; color: #222; margin-right: -1px; white-space: nowrap; }
.slabel i { border: 4px solid transparent; border-top-color: #757575; border-bottom: 0; }
.drop { flex: 1; height: 25px; margin-right: 2px; background: #fff; border: 1px solid #c4c4c4; border-radius: 4px; color: #aaa; padding: 1px 7px 0 7px; line-height: 22px; }
.drop.full { background: #ededed; border-color: #b0b0b0; display: flex; align-items: center; color: #222; padding-left: 8px; }
.drop .kind { margin-left: 8px; width: 21px; }
.drop .caret { border-width: 5px 4.500px 0; margin-top: 2px; }
.val { margin-left: 9px; flex: 1; }
.off { opacity: .5; }
.encscroll { width: 13px; background: #ededed; }
.encscroll i { display: block; height: 256px; background: #fff; border-radius: 6px; }
.marktools { height: 50px; display: flex; align-items: center; padding-left: 700px; color: #aaa; font-size: 12px; }
.t2 { margin-left: 16px; }
.t3 { margin-left: 16px; }
.t4 { margin-left: 16px; }
.t5 { margin-left: 16px; }
.letter { width: 14px; margin-left: 15px; text-align: center; font: bold 18px/18px "Liberation Serif", serif; }
.t7 { margin-left: 16px; }
.logy { margin-left: 4px; width: 37px; white-space: nowrap; -webkit-text-stroke: .2px #aaa; }
.t8 { margin-left: 14px; }
.trans { margin-left: 3px; width: 58px; -webkit-text-stroke: .3px #aaa; }
.t9 { margin-left: 13px; }
.chart { margin: -6px 0 0 167px; }
.chart text { font-size: 13.6px; fill: #333; }
.chart .mid { text-anchor: middle; }
.chart .end { text-anchor: end; }
.chart .cat { font-size: 13.9px; }
.chart .ct { text-anchor: middle; font-weight: 700; fill: #000; }
.chart .lt { font-weight: 700; fill: #000; }

aside { width: 58px; }
.side { position: relative; height: 51.400px; background: #f0f0f0; border-bottom: 1px solid #ddd; border-left: 3px solid #428bca; display: flex; align-items: center; padding-left: 12px; font: bold 14.5px "Liberation Serif", serif; color: #333; }
.side.short { height: 41px; }
.side.plain { height: 89px; background: #fff; border-left-color: #fff; padding: 36px 0 0 10px; }
.side.on { border-left-color: #fff; }
.side.link { padding-bottom: 3px; }
.side.mail { padding-top: 1px; }
.badge { position: absolute; right: 0; top: -5px; width: 18px; height: 20px; border-radius: 9px; background: #f00; color: #fff; font-size: 15px; line-height: 21px; text-align: center; }
.vscroll { width: 21px; background: #f0f0f0; display: flex; flex-direction: column; align-items: center; }
.vscroll .arrow { border: 4.500px solid transparent; border-top: 0; border-bottom: 5px solid #505050; margin: 9px 0 118px; }
.vscroll .thumb { width: 17px; flex: 1; background: #c1c1c1; }
.pagescroll { position: relative; width: 20px; background: #f0f0f0; display: flex; flex-direction: column; align-items: center; }
.pagescroll .arrow { border: 4.500px solid transparent; border-top: 0; border-bottom: 5px solid #a3a3a3; margin: 9px 0 7px; }
.pagescroll .thumb { width: 17px; height: 334px; background: #c1c1c1; }
.viewer { position: absolute; right: 0; bottom: 1px; }

.downloads { height: 60px; background: #000; border-top: 1px solid #ccc; display: flex; align-items: center; padding-left: 25px; font: 15px "Open Sans", sans-serif; color: #8c8c8c; }
.dname { margin: 7px 0 0 16px; width: 116px; white-space: nowrap; }
.up { margin-left: 76px; }
.dsep { width: 1px; height: 45px; background: #2d0000; margin-left: 22px; }
.showall { margin-left: 1400px; width: 98px; height: 35px; border: 1px solid #484848; border-radius: 3px; background: #111; text-align: center; line-height: 32px; font-size: 14.4px; margin-top: -2px; color: #909090; }
.dx { margin-left: 16px; }

.taskbar { width: 91px; background: #080808; display: flex; flex-direction: column; align-items: stretch; color: #eee; }
.slot { position: relative; flex: none; display: flex; align-items: center; justify-content: center; padding-right: 2px; }
.slot.active { background: linear-gradient(90deg, #2b2b2b 4px, #1c1c1c 4px, #1c1c1c 5px, #3b3b3b 5px); }
.slot i { position: absolute; right: 0; top: 50%; width: 3px; height: 48px; margin-top: -24px; background: #76b9ed; }
.slot i.many { width: 5px; background: linear-gradient(90deg, #5f93bc 3px, #2b4558 3px, #2b4558 4px, #5f93bc 4px); }
.slot.active i { height: 59px; margin-top: -29.500px; }
.hscroll { height: 22px; flex: none; background: #f0f0f0; margin-top: 3px; }
.clock { margin-top: 10px; padding-right: 1px; text-align: center; font: 14.3px/22px "Open Sans", sans-serif; height: 44px; }
.note { margin: 22px 0 0 34px; }
.edge { margin-top: 17px; height: 1px; background: #4a4a4a; }
</style>
